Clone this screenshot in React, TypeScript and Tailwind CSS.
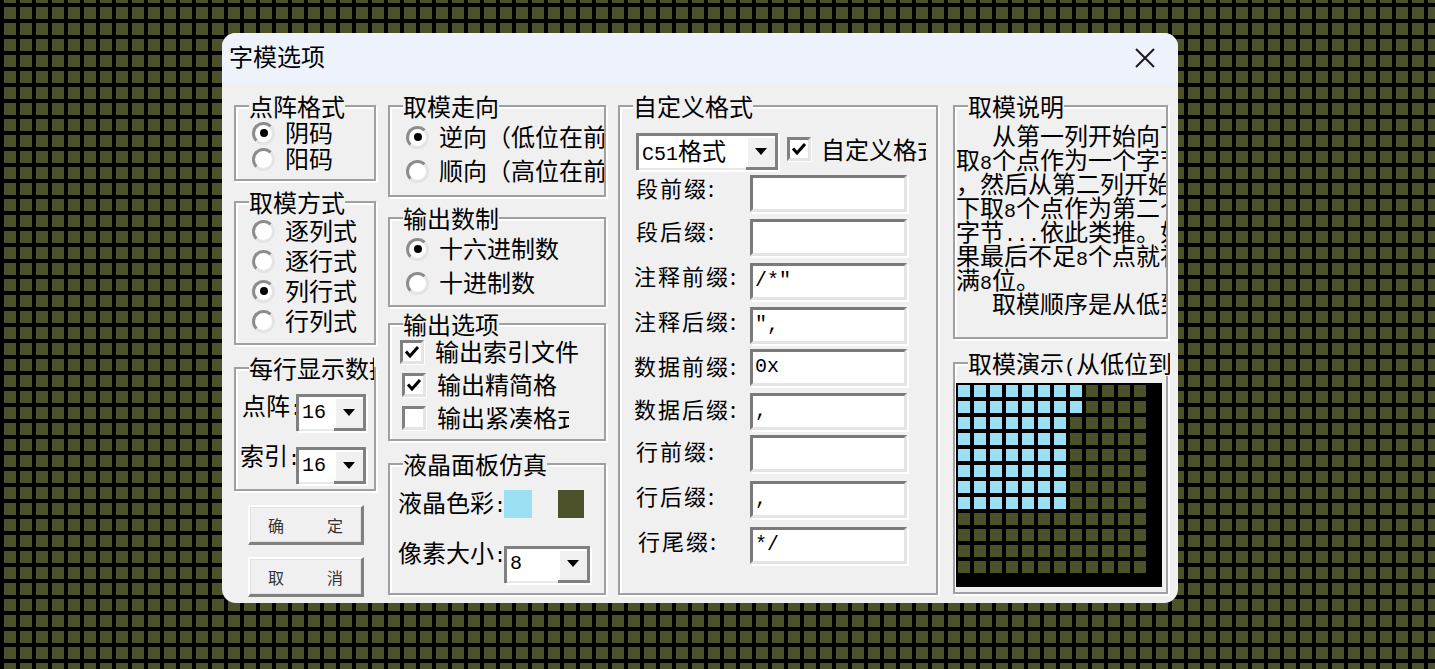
import type { ReactNode } from "react";

function Mono({ children }: { children: ReactNode }) {
  return <span className="font-['Liberation_Mono',monospace] text-[20px] leading-none">{children}</span>;
}

function Group({ title, className, titleClass, children }: { title: ReactNode; className: string; titleClass?: string; children: ReactNode }) {
  return (
    <div className={`relative border-2 border-[#a0a0a0] shadow-[2px_2px_0_#fff,inset_2px_2px_0_#fff] ${className}`}>
      <div className={`absolute -top-[13px] left-[13px] h-[25px] overflow-hidden whitespace-nowrap bg-[#f0f0f0] text-[24px] leading-[24px] ${titleClass ?? ""}`}>
        {title}
      </div>
      {children}
    </div>
  );
}

function Radio({ label, checked, className }: { label: string; checked?: boolean; className: string }) {
  return (
    <div className={`flex items-center gap-[10px] ${className}`}>
      <div className="flex h-[23px] w-[23px] shrink-0 items-center justify-center rounded-full border-[3px] border-t-[#8c8c8c] border-l-[#8c8c8c] border-r-[#e4e4e4] border-b-[#e4e4e4] bg-white">
        {checked && <div className="h-[8px] w-[8px] rounded-full bg-black" />}
      </div>
      <div className="min-w-0 flex-1 overflow-hidden whitespace-nowrap pb-[2px] text-[24px] leading-[28px]">{label}</div>
    </div>
  );
}

function Check({ checked }: { checked?: boolean }) {
  return (
    <div className="flex h-[24px] w-[24px] shrink-0 items-center justify-center border-[3px] border-t-[#808080] border-l-[#808080] border-r-[#e4e4e4] border-b-[#e4e4e4] bg-white shadow-[1px_1px_0_#fff]">
      {checked && (
        <svg width="16" height="14" viewBox="0 0 16 14">
          <path d="M2 6.5 L6 11 L14 2" fill="none" stroke="#000" strokeWidth="3" />
        </svg>
      )}
    </div>
  );
}

function Select({ value, className, textClass }: { value: ReactNode; className: string; textClass: string }) {
  return (
    <div className={`flex shrink-0 border-t-[3px] border-l-[3px] border-[#808080] bg-white shadow-[2px_2px_0_#fff] ${className}`}>
      <div className={`flex min-w-0 flex-1 items-center overflow-hidden whitespace-nowrap border-b-2 border-[#e8e8e8] pl-[3px] text-[24px] leading-[24px] ${textClass}`}>
        <span>{value}</span>
      </div>
      <div className="flex w-[32px] shrink-0 items-center justify-center border-r-[3px] border-b-[3px] border-[#808080] bg-[#f0f0f0] shadow-[inset_2px_2px_0_#fff]">
        <svg width="14" height="8" viewBox="0 0 14 8">
          <path d="M1 0 H13 L7 7 Z" fill="#000" />
        </svg>
      </div>
    </div>
  );
}

function Button({ left, right, className }: { left: string; right: string; className?: string }) {
  return (
    <div className={`ml-[14px] flex h-[40px] w-[116px] items-center justify-between border-t-2 border-l-2 border-r-[3px] border-b-[3px] border-t-white border-l-white border-r-[#808080] border-b-[#808080] bg-[#f0f0f0] px-[18px] text-[16px] leading-[20px] text-[#333] shadow-[inset_1px_1px_0_#e0e0e0,inset_-1px_-1px_0_#e0e0e0] ${className ?? ""}`}>
      <span>{left}</span>
      <span>{right}</span>
    </div>
  );
}

const fields = [
  { label: "段前缀:", value: "", row: "", text: "pl-[16px] pb-[14px]" },
  { label: "段后缀:", value: "", row: "mt-[5px]", text: "pl-[16px] pb-[16px]" },
  { label: "注释前缀:", value: '/*"', row: "mt-[5px]", text: "pl-[14px] pb-[14px]" },
  { label: "注释后缀:", value: '",', row: "mt-[5px]", text: "pl-[14px] pb-[12px]" },
  { label: "数据前缀:", value: "0x", row: "mt-[3px]", text: "pl-[14px] pb-[6px]" },
  { label: "数据后缀:", value: ",", row: "mt-[5px]", text: "pl-[14px] pb-[8px]" },
  { label: "行前缀:", value: "", row: "mt-[3px]", text: "pl-[16px] pb-[8px]" },
  { label: "行后缀:", value: ",", row: "mt-[7px]", text: "pl-[16px] pb-[10px]" },
  { label: "行尾缀:", value: "*/", row: "mt-[7px]", text: "pl-[18px] pb-[12px]" },
];

const notes: ReactNode[] = [
  <span className="pl-[36px]">从第一列开始向下</span>,
  <>取<Mono>8</Mono>个点作为一个字节</>,
  "，然后从第二列开始向",
  <>下取<Mono>8</Mono>个点作为第二个</>,
  <>字节<Mono>...</Mono>依此类推。如</>,
  <>果最后不足<Mono>8</Mono>个点就补</>,
  <>满<Mono>8</Mono>位。</>,
  <span className="pl-[36px]">取模顺序是从低到高</span>,
];

const cells = Array.from({ length: 144 }, (_, i) => {
  const r = Math.floor(i / 12);
  const c = i % 12;
  return r < 2 ? c < 8 : r < 8 && c < 7;
});

export default function App() {
  return (
    <div className="h-[669px] overflow-hidden bg-[#4c5129] bg-[linear-gradient(#000_4px,transparent_4px),linear-gradient(90deg,#000_4px,transparent_4px)] bg-[size:16px_16px] bg-[position:0_3px] pl-[222px] pt-[33px] font-['Noto_Sans_CJK_SC',sans-serif] text-black">
      <div className="h-[570px] w-[956px] overflow-hidden rounded-[14px] bg-[#f0f0f0]">
        <div className="flex h-[50px] items-center justify-between bg-[#eef3fb] pl-[7px] pr-[23px] text-[24px]">
          <span className="pb-[4px] leading-[30px]">字模选项</span>
          <svg width="20" height="20" viewBox="0 0 20 20">
            <path d="M1 1 L19 19 M19 1 L1 19" stroke="#1a1a1a" strokeWidth="2" fill="none" />
          </svg>
        </div>

        <div className="flex pl-[12px] pt-[22px]">
          <div className="w-[142px] shrink-0">
            <Group title="点阵格式" className="h-[76px] pl-[16px] pt-[13px]">
              <Radio label="阴码" checked className="h-[26px]" />
              <Radio label="阳码" className="h-[26px]" />
            </Group>
            <Group title="取模方式" className="mt-[20px] h-[144px] pl-[16px] pt-[13px]">
              <Radio label="逐列式" className="h-[30px]" />
              <Radio label="逐行式" className="h-[30px]" />
              <Radio label="列行式" checked className="h-[30px]" />
              <Radio label="行列式" className="h-[30px]" />
            </Group>
            <Group title="每行显示数据" titleClass="w-[125px]" className="mt-[22px] h-[124px] pt-[24px]">
              <div className="flex items-center">
                <div className="w-[60px] whitespace-nowrap pb-[12px] pl-[6px] text-[24px] leading-[24px]">点阵<Mono>:</Mono></div>
                <Select value={<Mono>16</Mono>} textClass="pb-[8px]" className="h-[37px] w-[70px]" />
              </div>
              <div className="mt-[13px] flex items-center">
                <div className="w-[60px] whitespace-nowrap pb-[16px] pl-[4px] text-[24px] leading-[20px]">索引<Mono>:</Mono></div>
                <Select value={<Mono>16</Mono>} textClass="pb-[8px]" className="h-[37px] w-[70px]" />
              </div>
            </Group>
            <Button left="确" right="定" className="mt-[14px]" />
            <Button left="取" right="消" className="mt-[12px]" />
          </div>

          <div className="ml-[12px] w-[218px] shrink-0">
            <Group title="取模走向" className="h-[92px] pl-[16px] pt-[13px]">
              <Radio label="逆向（低位在前）" checked className="h-[34px]" />
              <Radio label="顺向（高位在前）" className="h-[34px]" />
            </Group>
            <Group title="输出数制" className="mt-[20px] h-[90px] pl-[16px] pt-[13px]">
              <Radio label="十六进制数" checked className="h-[34px]" />
              <Radio label="十进制数" className="h-[34px]" />
            </Group>
            <Group title="输出选项" className="mt-[16px] h-[118px] pt-[10px]">
              <div className="ml-[10px] flex h-[33px] items-center gap-[11px] text-[24px] leading-[28px]">
                <Check checked />
                <span className="whitespace-nowrap pb-[2px]">输出索引文件</span>
              </div>
              <div className="ml-[12px] flex h-[33px] items-center gap-[11px] text-[24px] leading-[28px]">
                <Check checked />
                <span className="whitespace-nowrap pb-[2px]">输出精简格</span>
              </div>
              <div className="ml-[12px] flex h-[33px] items-center gap-[11px] text-[24px] leading-[28px]">
                <Check />
                <span className="w-[132px] overflow-hidden whitespace-nowrap pb-[2px]">输出紧凑格式</span>
              </div>
            </Group>
            <Group title="液晶面板仿真" className="mt-[22px] h-[132px] pl-[8px] pt-[24px]">
              <div className="flex items-center">
                <div className="w-[106px] whitespace-nowrap pb-[2px] text-[24px] leading-[26px]">液晶色彩<Mono>:</Mono></div>
                <div className="h-[28px] w-[28px] bg-[#9bdff2]" />
                <div className="ml-[26px] h-[28px] w-[26px] bg-[#4c5129]" />
              </div>
              <div className="mt-[24px] flex items-center">
                <div className="w-[106px] whitespace-nowrap pb-[18px] text-[24px] leading-[18px]">像素大小<Mono>:</Mono></div>
                <Select value={<Mono>8</Mono>} textClass="pb-[8px]" className="h-[37px] w-[86px]" />
              </div>
            </Group>
          </div>

          <div className="ml-[12px] w-[320px] shrink-0">
            <Group title="自定义格式" className="h-[490px] pt-[26px]">
              <div className="ml-[16px] flex h-[39px] items-start">
                <Select value={<><Mono>C51</Mono>格式</>} textClass="pb-[2px]" className="h-[37px] w-[142px]" />
                <div className="ml-[9px] mt-[4px]">
                  <Check checked />
                </div>
                <div className="ml-[10px] mt-[1px] w-[105px] overflow-hidden whitespace-nowrap text-[24px] leading-[30px]">自定义格式</div>
              </div>
              <div className="mt-[3px]">
                {fields.map((f) => (
                  <div key={f.label} className={`flex h-[39px] items-start ${f.row}`}>
                    <div className={`flex h-[37px] w-[130px] shrink-0 items-center whitespace-nowrap text-[22px] leading-[22px] tracking-[2px] ${f.text}`}>{f.label}</div>
                    <div className="h-[37px] w-[157px] border-[3px] border-t-[#7a7a7a] border-l-[#7a7a7a] border-r-[#e4e4e4] border-b-[#e4e4e4] bg-white pl-[2px] font-['Liberation_Mono',monospace] text-[20px] leading-[30px] shadow-[2px_2px_0_#fff]">
                      {f.value}
                    </div>
                  </div>
                ))}
              </div>
            </Group>
          </div>

          <div className="ml-[15px] w-[215px] shrink-0">
            <Group title="取模说明" className="h-[234px] pl-[1px] pt-[16px]">
              <div className="overflow-hidden text-[24px] leading-[24px]">
                {notes.map((n, i) => (
                  <div key={i} className="h-[24px] whitespace-nowrap">{n}</div>
                ))}
              </div>
            </Group>
            <Group title={<>取模演示<Mono>(</Mono>从低位到高位<Mono>)</Mono></>} titleClass="w-[202px]" className="mt-[23px] h-[232px] pl-[1px] pt-[19px]">
              <div className="grid h-[204px] w-[206px] grid-cols-[repeat(12,12px)] content-start gap-[4px] bg-black p-[2px]">
                {cells.map((on, i) => (
                  <div key={i} className={on ? "h-[12px] bg-[#9bdff2]" : "h-[12px] bg-[#4c5129]"} />
                ))}
              </div>
            </Group>
          </div>
        </div>
      </div>
    </div>
  );
}
